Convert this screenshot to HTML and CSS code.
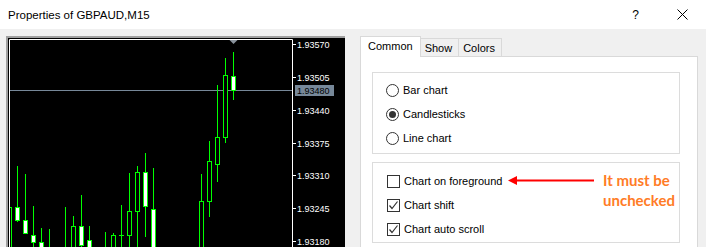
FILE: index.html
```html
<!DOCTYPE html>
<html lang="en">

<head>
    <meta charset="UTF-8">
    <meta
        name="viewport"
        content="width=device-width, initial-scale=1.0"
    >
    <link rel="stylesheet" href="styles.css">
    <title>Properties of GBPAUD,M15</title>
</head>

<body>
    <div class="titlebar">
        <span class="title">Properties of GBPAUD,M15</span>
        <span class="help">?</span>
        <svg class="close" width="11" height="11" viewBox="0 0 11 11">
            <path d="M0.5 0.5 L10.5 10.5 M10.5 0.5 L0.5 10.5" stroke="#000" stroke-width="1" fill="none" />
        </svg>
    </div>

    <div class="dialog">
        <div class="chart">
            <svg width="337" height="209" viewBox="8 38 337 209">
                <defs>
                    <clipPath id="plot">
                        <rect x="10" y="40" width="282" height="220" />
                    </clipPath>
                </defs>
                <path d="M9.5 260 V39.5 H292.5 V260" stroke="#fff" fill="none" />
                <line x1="10" y1="90.5" x2="292" y2="90.5" stroke="#778899" />
                <polygon points="229.5,40 237.5,40 233.5,44" fill="#8a939c" />

                <g clip-path="url(#plot)" stroke="#00ff00" stroke-width="1">
                    <!-- wicks -->
                    <line x1="9.5" y1="207" x2="9.5" y2="260" />
                    <line x1="17.5" y1="166" x2="17.5" y2="222" />
                    <line x1="25.5" y1="174" x2="25.5" y2="233" />
                    <line x1="33.5" y1="206" x2="33.5" y2="260" />
                    <line x1="41.5" y1="228" x2="41.5" y2="260" />
                    <line x1="49.5" y1="229" x2="49.5" y2="260" />
                    <line x1="65.5" y1="207" x2="65.5" y2="260" />
                    <line x1="73.5" y1="216" x2="73.5" y2="260" />
                    <line x1="81.5" y1="195" x2="81.5" y2="260" />
                    <line x1="89.5" y1="226" x2="89.5" y2="260" />
                    <line x1="105.5" y1="232" x2="105.5" y2="260" />
                    <line x1="113.5" y1="233" x2="113.5" y2="260" />
                    <line x1="121.5" y1="205" x2="121.5" y2="260" />
                    <line x1="119" y1="235.5" x2="124" y2="235.5" />
                    <line x1="129.5" y1="173" x2="129.5" y2="260" />
                    <line x1="137.5" y1="166" x2="137.5" y2="260" />
                    <line x1="145.5" y1="153" x2="145.5" y2="237" />
                    <line x1="153.5" y1="168" x2="153.5" y2="260" />
                    <line x1="201.5" y1="174" x2="201.5" y2="260" />
                    <line x1="209.5" y1="141" x2="209.5" y2="217" />
                    <line x1="217.5" y1="85" x2="217.5" y2="182" />
                    <line x1="225.5" y1="58" x2="225.5" y2="143" />
                    <line x1="233.5" y1="52" x2="233.5" y2="100" />

                    <!-- bodies: black = rising, white = falling -->
                    <rect x="7.5" y="207.5" width="4" height="60" fill="#000" />
                    <rect x="15.5" y="207.5" width="4" height="13" fill="#fff" />
                    <rect x="23.5" y="220.5" width="4" height="13" fill="#fff" />
                    <rect x="31.5" y="235.5" width="4" height="7" fill="#fff" />
                    <rect x="39.5" y="242.5" width="4" height="20" fill="#fff" />
                    <rect x="71.5" y="226.5" width="4" height="40" fill="#000" />
                    <rect x="79.5" y="226.5" width="4" height="19" fill="#fff" />
                    <rect x="87.5" y="240.5" width="4" height="20" fill="#fff" />
                    <rect x="111.5" y="235.5" width="4" height="30" fill="#000" />
                    <rect x="127.5" y="211.5" width="4" height="24" fill="#000" />
                    <rect x="135.5" y="172.5" width="4" height="39" fill="#000" />
                    <rect x="143.5" y="172.5" width="4" height="34" fill="#fff" />
                    <rect x="151.5" y="209.5" width="4" height="50" fill="#fff" />
                    <rect x="199.5" y="201.5" width="4" height="60" fill="#000" />
                    <rect x="207.5" y="161.5" width="4" height="40" fill="#000" />
                    <rect x="215.5" y="137.5" width="4" height="27" fill="#000" />
                    <rect x="223.5" y="75.5" width="4" height="62" fill="#000" />
                    <rect x="231.5" y="76.5" width="4" height="14" fill="#fff" />
                </g>

                <g stroke="#fff">
                    <line x1="292" y1="44.5" x2="296" y2="44.5" />
                    <line x1="292" y1="77.5" x2="296" y2="77.5" />
                    <line x1="292" y1="110.5" x2="296" y2="110.5" />
                    <line x1="292" y1="143.5" x2="296" y2="143.5" />
                    <line x1="292" y1="175.5" x2="296" y2="175.5" />
                    <line x1="292" y1="208.5" x2="296" y2="208.5" />
                    <line x1="292" y1="241.5" x2="296" y2="241.5" />
                </g>
                <g class="axis">
                    <text x="297" y="48">1.93570</text>
                    <text x="297" y="81">1.93505</text>
                    <text x="297" y="114">1.93440</text>
                    <text x="297" y="147">1.93375</text>
                    <text x="297" y="179">1.93310</text>
                    <text x="297" y="212">1.93245</text>
                    <text x="297" y="245">1.93180</text>
                </g>
                <rect x="295" y="85" width="39" height="11" fill="#778899" />
                <text class="axis bid" x="297" y="94">1.93480</text>
            </svg>
        </div>

        <div class="props">
            <div class="tabs">
                <div class="tab active">Common</div>
                <div class="tab">Show</div>
                <div class="tab">Colors</div>
            </div>
            <div class="tab-panel">
                <div class="group">
                    <label class="row">
                        <span class="radio"></span>
                        Bar chart
                    </label>
                    <label class="row">
                        <span class="radio checked"></span>
                        Candlesticks
                    </label>
                    <label class="row">
                        <span class="radio"></span>
                        Line chart
                    </label>
                </div>
                <div class="group options">
                    <label class="row">
                        <span class="check"></span>
                        Chart on foreground
                    </label>
                    <label class="row">
                        <span class="check checked">
                            <svg width="11" height="11" viewBox="0 0 11 11">
                                <path d="M1.5 5.5 L4 8.5 L9.5 1.5" stroke="#333" stroke-width="1.2" fill="none" />
                            </svg>
                        </span>
                        Chart shift
                    </label>
                    <label class="row">
                        <span class="check checked">
                            <svg width="11" height="11" viewBox="0 0 11 11">
                                <path d="M1.5 5.5 L4 8.5 L9.5 1.5" stroke="#333" stroke-width="1.2" fill="none" />
                            </svg>
                        </span>
                        Chart auto scroll
                    </label>

                    <svg class="arrow" width="86" height="9" viewBox="0 0 86 9">
                        <polygon points="0,4.5 9,0 9,9" fill="#f00" />
                        <rect x="8" y="3.5" width="78" height="2" fill="#f00" />
                    </svg>
                    <div class="note">It must be<br>unchecked</div>
                </div>
            </div>
        </div>
    </div>
</body>

</html>
```

FILE: styles.css
```css
body {
    margin: 0;
    width: 706px;
    height: 247px;
    overflow: hidden;
    background-color: #f0f0f0;
    font-family: "Liberation Sans", Arial, sans-serif;
    font-size: 11px;
    color: #000;
}

.titlebar {
    height: 29px;
    display: flex;
    align-items: center;
    padding-left: 8px;
    background-color: #fff;
}

.title {
    font-size: 11.5px;
}

.help {
    margin-left: auto;
    font-size: 12px;
}

.close {
    margin-left: 38px;
    margin-right: 18px;
}

.dialog {
    display: flex;
    align-items: flex-start;
    height: 218px;
    overflow: hidden;
    padding: 7px 0 0 6px;
    box-sizing: border-box;
}

.chart {
    width: 339px;
    height: 211px;
    flex-shrink: 0;
    border-top: 2px solid #a0a0a0;
    border-left: 2px solid #a0a0a0;
    box-sizing: border-box;
    background-color: #000;
}

.chart svg {
    display: block;
}

.axis text,
text.axis {
    font-family: "Liberation Sans", sans-serif;
    font-size: 9px;
    fill: #fff;
}

text.bid {
    fill: #000;
}

.props {
    margin-left: 15px;
    width: 338px;
}

.tabs {
    display: flex;
    align-items: flex-end;
    height: 20px;
    position: relative;
    z-index: 1;
}

.tab {
    height: 18px;
    padding: 0 6px 0 4px;
    display: flex;
    align-items: center;
    border: 1px solid #d9d9d9;
    border-left: none;
    border-bottom: none;
    box-sizing: border-box;
    background-color: #f0f0f0;
}

.tab.active {
    height: 21px;
    margin-bottom: -1px;
    padding: 0 7px 2px 7px;
    border-left: 1px solid #d9d9d9;
    background-color: #fff;
}

.tab-panel {
    height: 191px;
    box-sizing: border-box;
    padding: 15px 17px 0 11px;
    border: 1px solid #d9d9d9;
    border-bottom: none;
    background-color: #fff;
}

.group {
    height: 82px;
    padding: 5px 0 0 13px;
    box-sizing: border-box;
    border: 1px solid #dcdcdc;
}

.group.options {
    position: relative;
    height: 81px;
    margin-top: 8px;
    padding: 6px 0 0 14px;
}

.row {
    height: 24px;
    display: flex;
    align-items: center;
    gap: 4px;
}

.radio {
    width: 13px;
    height: 13px;
    box-sizing: border-box;
    border: 1px solid #333;
    border-radius: 50%;
    display: flex;
    align-items: center;
    justify-content: center;
}

.radio.checked::after {
    content: "";
    width: 7px;
    height: 7px;
    border-radius: 50%;
    background-color: #333;
}

.check {
    width: 13px;
    height: 13px;
    box-sizing: border-box;
    border: 1px solid #333;
    display: flex;
    align-items: center;
    justify-content: center;
}

.check svg {
    display: block;
}

.arrow {
    position: absolute;
    left: 135px;
    top: 13px;
}

.note {
    position: absolute;
    left: 230px;
    top: 7px;
    font-family: Lato, "Open Sans", sans-serif;
    font-weight: bold;
    font-size: 15px;
    line-height: 20px;
    color: #ff7c26;
}
```
